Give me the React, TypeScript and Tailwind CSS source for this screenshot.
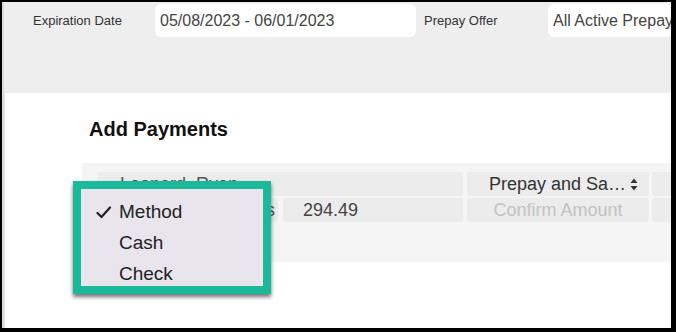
export default function App() {
  const font = { fontFamily: '"Liberation Sans", Arial, sans-serif' };
  return (
    <div
      className="w-[676px] h-[332px] bg-black pt-[2px] pl-[2px] pr-[5px] pb-[4px] overflow-hidden"
      style={font}
    >
      <div className="relative w-full h-full bg-white overflow-hidden flex flex-col border-l-2 border-[#dcdcdc]">
        {/* filter panel */}
        <div className="h-[91px] bg-[#eeeeee] shrink-0">
          <div className="flex items-center h-[33px] mt-[2px]">
            <div className="w-[151px] pl-[29px] text-[13px] text-[#333]">Expiration Date</div>
            <div className="w-[261px] h-full bg-white rounded-md flex items-center pl-[5px] text-[16px] text-[#444]">
              05/08/2023 - 06/01/2023
            </div>
            <div className="w-[132px] pl-[8px] text-[13px] text-[#333]">Prepay Offer</div>
            <div className="flex-1 h-full bg-white rounded-l-md flex items-center pl-[5px] text-[16px] text-[#444] whitespace-nowrap overflow-hidden">
              All Active Prepay
            </div>
          </div>
        </div>

        {/* content */}
        <div className="flex-1 border-l border-[#e4e4e4]">
          <div className="pl-[84px] mt-[24px] h-[24px] leading-[24px] text-[20px] font-bold text-[#111]">
            Add Payments
          </div>
          <div className="ml-[77px] mt-[22px] h-[99px] bg-[#f5f5f5] pt-[9px] pl-[15px] flex flex-col gap-[2px]">
            <div className="flex h-[24px] gap-[4px] text-[18px]">
              <div className="w-[366px] shrink-0 bg-[#ececec] rounded-[3px] flex items-center pl-[23px] text-[#555]">
                Leonard, Ryan
              </div>
              <div className="w-[182px] shrink-0 bg-[#ececec] rounded-[3px] flex items-center justify-end pr-[11px] text-[#333] whitespace-nowrap">
                Prepay and Sa…
                <svg width="8" height="13" viewBox="0 0 8 13" className="ml-[4px]">
                  <path d="M4 0.5 L7.5 5 L0.5 5 Z" fill="#333" />
                  <path d="M4 12.5 L7.5 8 L0.5 8 Z" fill="#333" />
                </svg>
              </div>
              <div className="flex-1 ml-[-1px] bg-[#ececec] rounded-l-[3px]"></div>
            </div>
            <div className="flex h-[24px] text-[18px]">
              <div className="w-[181px] shrink-0 bg-[#ececec] rounded-[3px] flex items-center justify-end pr-[3px] text-[#555]">
                Payments
              </div>
              <div className="w-[180px] shrink-0 ml-[5px] bg-[#ececec] rounded-[3px] flex items-center pl-[20px] text-[#444]">
                294.49
              </div>
              <div className="w-[182px] shrink-0 ml-[4px] bg-[#ececec] rounded-[3px] flex items-center justify-center text-[#c2c2c2] whitespace-nowrap">
                Confirm Amount
              </div>
              <div className="flex-1 ml-[3px] bg-[#ececec] rounded-l-[3px]"></div>
            </div>
          </div>
        </div>

        {/* payment method menu */}
        <div className="absolute left-[69px] top-[179px] w-[198px] h-[113px] border-[8px] border-[#1bb99a] bg-[#e9e5ed] shadow-[0_3px_4px_rgba(0,0,0,0.55)] pt-[8px] text-[19px] text-[#222]">
          <div className="h-[31px] flex items-center pl-[15px]">
            <svg width="16" height="13" viewBox="0 0 16 13" className="mr-[7px]">
              <path d="M1.5 7 L5.5 11 L14 1.5" fill="none" stroke="#222" strokeWidth="2.2" strokeLinecap="round" strokeLinejoin="round" />
            </svg>
            Method
          </div>
          <div className="h-[31px] flex items-center pl-[38px]">Cash</div>
          <div className="h-[31px] flex items-center pl-[38px]">Check</div>
        </div>
      </div>
    </div>
  );
}
